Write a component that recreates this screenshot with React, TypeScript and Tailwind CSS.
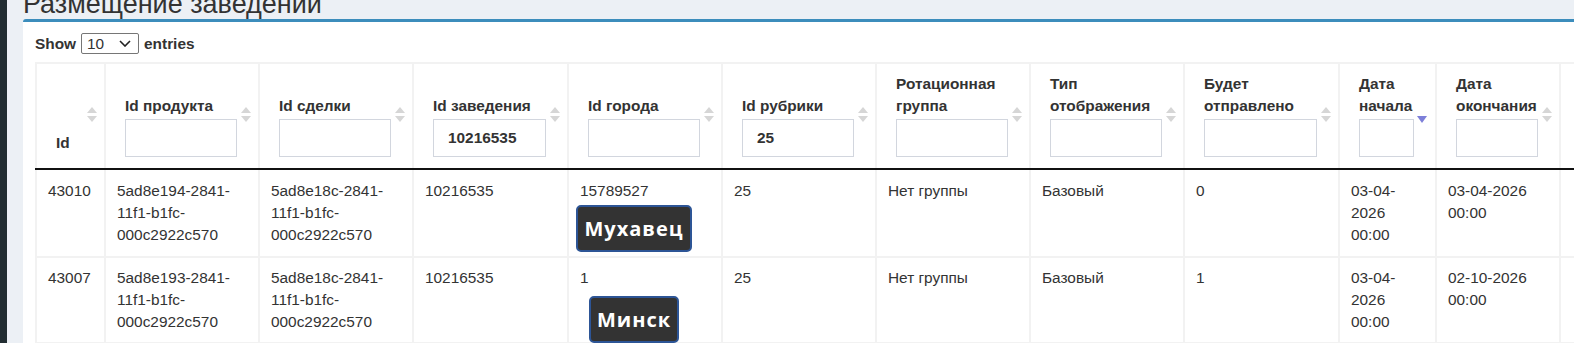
const gridCols = "grid grid-cols-[69px_154px_154px_155px_154px_154px_154px_154px_155px_97px_124px_100px]";

interface HeaderCol {
  label: string[];
  filter?: string;
  hasInput: boolean;
  sort: "both" | "desc" | "none";
}

const headers: HeaderCol[] = [
  { label: ["Id"], hasInput: false, sort: "both" },
  { label: ["Id продукта"], hasInput: true, sort: "both" },
  { label: ["Id сделки"], hasInput: true, sort: "both" },
  { label: ["Id заведения"], filter: "10216535", hasInput: true, sort: "both" },
  { label: ["Id города"], hasInput: true, sort: "both" },
  { label: ["Id рубрики"], filter: "25", hasInput: true, sort: "both" },
  { label: ["Ротационная", "группа"], hasInput: true, sort: "both" },
  { label: ["Тип", "отображения"], hasInput: true, sort: "both" },
  { label: ["Будет", "отправлено"], hasInput: true, sort: "both" },
  { label: ["Дата", "начала"], hasInput: true, sort: "desc" },
  { label: ["Дата", "окончания"], hasInput: true, sort: "both" },
  { label: [], hasInput: false, sort: "none" },
];

interface Row {
  id: string;
  product: string[];
  deal: string[];
  place: string;
  city: string;
  cityName: string;
  rubric: string;
  group: string;
  display: string;
  sent: string;
  start: string[];
  end: string[];
  height: string;
  pad: string;
  badgeGap: string;
}

const rows: Row[] = [
  {
    id: "43010",
    product: ["5ad8e194-2841-", "11f1-b1fc-", "000c2922c570"],
    deal: ["5ad8e18c-2841-", "11f1-b1fc-", "000c2922c570"],
    place: "10216535",
    city: "15789527",
    cityName: "Мухавец",
    rubric: "25",
    group: "Нет группы",
    display: "Базовый",
    sent: "0",
    start: ["03-04-", "2026", "00:00"],
    end: ["03-04-2026", "00:00"],
    height: "h-[88px]",
    pad: "pt-[10px]",
    badgeGap: "mt-[3px]",
  },
  {
    id: "43007",
    product: ["5ad8e193-2841-", "11f1-b1fc-", "000c2922c570"],
    deal: ["5ad8e18c-2841-", "11f1-b1fc-", "000c2922c570"],
    place: "10216535",
    city: "1",
    cityName: "Минск",
    rubric: "25",
    group: "Нет группы",
    display: "Базовый",
    sent: "1",
    start: ["03-04-", "2026", "00:00"],
    end: ["02-10-2026", "00:00"],
    height: "h-[86px]",
    pad: "pt-[9px]",
    badgeGap: "mt-[7px]",
  },
];

function SortIcon({ kind }: { kind: "both" | "desc" }) {
  if (kind === "desc") {
    return (
      <svg className="absolute right-[8px] top-[52px]" width="10" height="8" viewBox="0 0 10 8">
        <polygon points="0,0 10,0 5,7" fill="#7d7fd9" />
      </svg>
    );
  }
  return (
    <svg className="absolute right-[7px] top-[43px]" width="10" height="15" viewBox="0 0 10 15">
      <polygon points="5,0 10,6 0,6" fill="#d6d6d6" />
      <polygon points="0,9 10,9 5,15" fill="#d6d6d6" />
    </svg>
  );
}

function Lines({ lines }: { lines: string[] }) {
  return (
    <>
      {lines.map((line, i) => (
        <div key={i} className="whitespace-nowrap">{line}</div>
      ))}
    </>
  );
}

export default function App() {
  return (
    <div className="flex h-[343px] w-full overflow-hidden bg-[#ecf0f5] font-['Liberation_Sans',Arial,sans-serif] text-[#333]">
      <div className="w-[7px] shrink-0 bg-[#222d32]" />
      <div className="min-w-0 flex-1 pl-[16px]">
        <h1 className="-mt-[9px] h-[28px] whitespace-nowrap text-[27px] leading-none font-normal">Размещение заведений</h1>
        <div className="w-[1650px] rounded-t-[3px] border-t-[3px] border-[#3c8dbc] bg-white pl-[12px]">
          <div className="flex h-[40px] items-center gap-[5px] pt-[3px] text-[15.4px] font-bold">
            <span>Show</span>
            <div className="flex h-[21px] w-[58px] items-center justify-between rounded-[2px] border border-[#767676] pl-[5px] pr-[7px] font-normal">
              <span>10</span>
              <svg width="12" height="7" viewBox="0 0 12 7">
                <path d="M1 1l5 5 5-5" fill="none" stroke="#222" strokeWidth="1.6" />
              </svg>
            </div>
            <span>entries</span>
          </div>

          <div className={`${gridCols} border-t-2 border-b-2 border-t-[#f2f2f2] border-b-[#111] text-[15.4px] font-bold leading-[22px]`}>
            {headers.map((h, i) => (
              <div key={i} className={`relative flex flex-col justify-end border-l-2 border-[#f2f2f2] pt-[9px] pl-[19px] pr-[21px] ${h.hasInput ? "pb-[11px]" : "pb-[14px]"}`}>
                <Lines lines={h.label} />
                {h.hasInput && (
                  <div className="mt-[2px] flex h-[38px] w-full items-center border border-[#d2d6de] pl-[14px]">{h.filter}</div>
                )}
                {h.sort !== "none" && <SortIcon kind={h.sort} />}
              </div>
            ))}
          </div>

          {rows.map((r) => {
            const cell = `border-l-2 border-[#f2f2f2] pl-[11px] ${r.pad}`;
            return (
              <div key={r.id} className={`${gridCols} ${r.height} border-b-2 border-[#f2f2f2] text-[15.4px] leading-[22px]`}>
                <div className={cell}>{r.id}</div>
                <div className={cell}><Lines lines={r.product} /></div>
                <div className={cell}><Lines lines={r.deal} /></div>
                <div className={cell}>{r.place}</div>
                <div className={`${cell} pr-[33px]`}>
                  <div>{r.city}</div>
                  <div className={`flex justify-center ${r.badgeGap}`}>
                    <span className="flex h-[47px] shrink-0 items-center rounded-[5px] border-2 border-[#2d5596] bg-[#333] px-[6px] font-['Open_Sans',sans-serif] text-[20px] font-bold tracking-[1px] text-white">
                      {r.cityName}
                    </span>
                  </div>
                </div>
                <div className={cell}>{r.rubric}</div>
                <div className={cell}>{r.group}</div>
                <div className={cell}>{r.display}</div>
                <div className={cell}>{r.sent}</div>
                <div className={cell}><Lines lines={r.start} /></div>
                <div className={cell}><Lines lines={r.end} /></div>
                <div className={cell} />
              </div>
            );
          })}
        </div>
      </div>
    </div>
  );
}
